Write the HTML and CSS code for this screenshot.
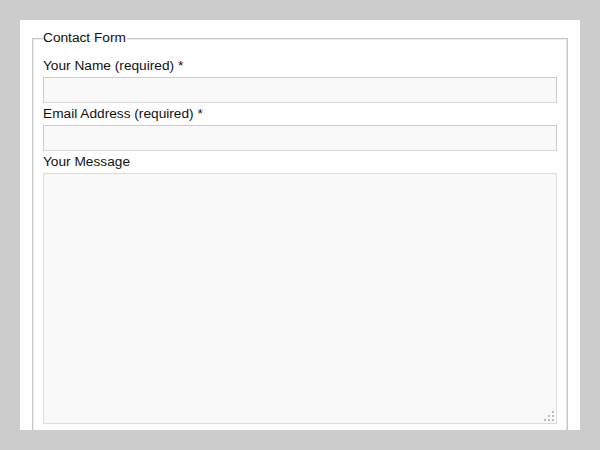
FILE: index.html
```html
<!DOCTYPE html>
<html lang="en">
<head>
    <meta charset="UTF-8">
    <meta name="viewport" content="width=device-width, initial-scale=1.0">
    <link rel="stylesheet" href="styles.css">
    <title>Contact Form</title>
</head>
<body>

<div class="panel">
    <form class="contactForm">
        <fieldset>
            <legend>Contact Form</legend>
            <label for="yourName">Your Name (required) *</label>
            <input type="text" id="yourName" class="field">
            <label for="yourEmail">Email Address (required) *</label>
            <input type="text" id="yourEmail" class="field">
            <label for="yourMessage">Your Message</label>
            <div class="messageBox">
                <textarea id="yourMessage" class="field message"></textarea>
                <span class="grip"></span>
            </div>
        </fieldset>
    </form>
</div>

</body>
</html>
```

FILE: styles.css
```css
html,
body {
    margin: 0;
    height: 100%;
    background-color: #ccc;
}

body {
    padding: 20px;
    box-sizing: border-box;
    font-family: Arial, "Liberation Sans", sans-serif;
    font-size: 13.7px;
    color: #111;
}

.panel {
    background-color: #fff;
    height: 410px;
    overflow: hidden;
    padding: 10px 13px 0 12px;
    box-sizing: border-box;
}

.contactForm {
    margin: 0;
}

fieldset {
    margin: 0;
    padding: 12px 9px 20px 10px;
    border: 1px solid #c8c8c8;
    border-right-color: #e4e4e4;
    border-bottom-color: #e4e4e4;
    box-shadow: inset 1px 1px 0 #eee, 1px 0 0 #c8c8c8;
}

legend {
    padding: 0 1px 0 0;
    line-height: 16px;
}

label {
    display: block;
    line-height: 16px;
}

.field {
    display: block;
    width: 100%;
    height: 26px;
    box-sizing: border-box;
    margin: 3px 0 3px;
    border: 1px solid #ccc;
    border-bottom-color: #d8d8d8;
    background-color: #f9f9f9;
    font-family: inherit;
    font-size: 14px;
}

.messageBox {
    position: relative;
    margin-top: 3px;
}

.message {
    height: 251px;
    margin: 0;
    border-color: #ddd;
    resize: none;
}

.grip {
    position: absolute;
    right: 3px;
    bottom: 3px;
    width: 10px;
    height: 10px;
    background:
        linear-gradient(#bbb, #bbb) 8px 0 / 2px 2px no-repeat,
        linear-gradient(#bbb, #bbb) 4px 4px / 2px 2px no-repeat,
        linear-gradient(#bbb, #bbb) 8px 4px / 2px 2px no-repeat,
        linear-gradient(#bbb, #bbb) 0 8px / 2px 2px no-repeat,
        linear-gradient(#bbb, #bbb) 4px 8px / 2px 2px no-repeat,
        linear-gradient(#bbb, #bbb) 8px 8px / 2px 2px no-repeat;
}
```
